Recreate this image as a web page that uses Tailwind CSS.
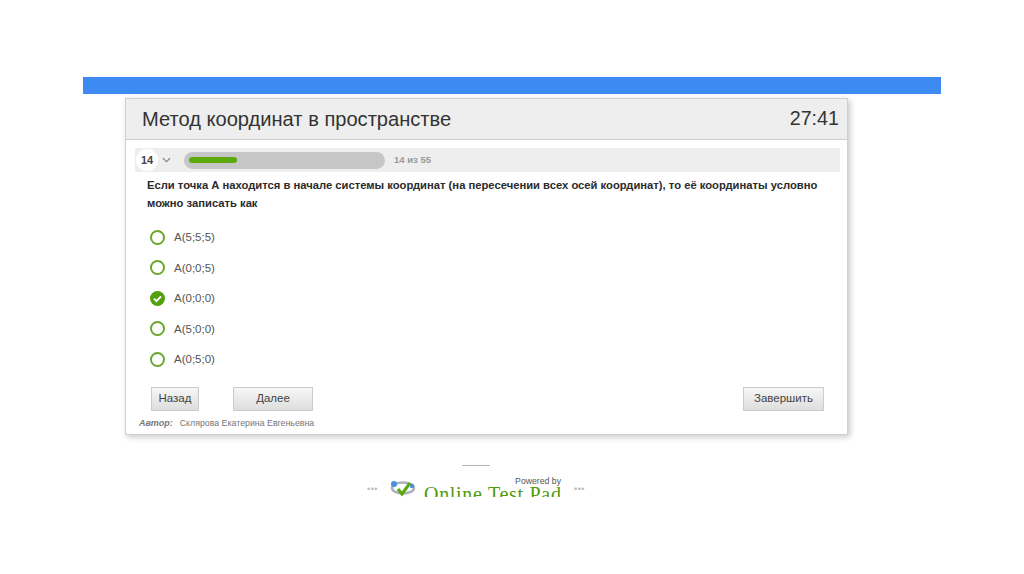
<!DOCTYPE html>
<html lang="ru">
<head>
<meta charset="utf-8">
<script src="https://cdn.jsdelivr.net/npm/@tailwindcss/browser@4"></script>
</head>
<body class="bg-white font-['Liberation_Sans',Arial,sans-serif]">
<div class="w-[1024px] h-[574px] overflow-hidden pt-[77px]">
  <div class="ml-[83px] w-[858px] h-[17px] bg-[#3d8bf2]"></div>
  <main class="ml-[125px] mt-[4px] w-[723px] h-[337px] bg-white border border-[#d0d0d0] shadow-[2px_2px_6px_rgba(0,0,0,0.22)] flex flex-col">
    <header class="h-[41px] shrink-0 bg-[#eeeeee] border-b border-[#cfcfcf] flex items-center justify-between pl-[16px] pr-[8px] text-[#333333]">
      <h1 class="text-[20.1px] leading-none">Метод координат в пространстве</h1>
      <div class="text-[19.7px] leading-none">27:41</div>
    </header>
    <div class="mt-[8px] ml-[9px] w-[705px] h-[24px] shrink-0 bg-[#eeeeee] flex items-center">
      <div class="ml-[1px] w-[22px] h-[22px] rounded-full bg-white flex items-center justify-center text-[11px] font-bold text-[#444444]">14</div>
      <svg class="ml-[4px] w-[9px] h-[6px]" viewBox="0 0 10 6" fill="none" stroke="#777777" stroke-width="1.2"><path d="M1 1l4 4 4-4"/></svg>
      <div class="ml-[13px] w-[201px] h-[17px] rounded-full bg-[#c6c6c6] flex items-center pl-[5px]">
        <div class="w-[48px] h-[6px] rounded-full bg-[#5aa80c]"></div>
      </div>
      <div class="ml-[9px] text-[9.5px] font-bold text-[#9a9a9a]">14 из 55</div>
    </div>
    <p class="mt-[5px] ml-[21px] w-[690px] text-[11.23px] leading-[17.5px] font-bold text-[#2b2b2b]">Если точка А находится в начале системы координат (на пересечении всех осей координат), то её координаты условно можно записать как</p>
    <ul class="mt-[17px] ml-[24px] flex flex-col gap-[14.5px] text-[11.5px] leading-[16px] text-[#555555]">
      <li class="flex items-center gap-[9px]"><span class="w-[15px] h-[15px] rounded-full border-2 border-[#6aa72c]"></span>A(5;5;5)</li>
      <li class="flex items-center gap-[9px]"><span class="w-[15px] h-[15px] rounded-full border-2 border-[#6aa72c]"></span>A(0;0;5)</li>
      <li class="flex items-center gap-[9px]"><svg class="w-[15px] h-[15px]" viewBox="0 0 15 15"><circle cx="7.5" cy="7.5" r="7.5" fill="#52a00e"/><path d="M4 7.6l2.5 2.5L11 5.4" fill="none" stroke="#fff" stroke-width="2"/></svg>A(0;0;0)</li>
      <li class="flex items-center gap-[9px]"><span class="w-[15px] h-[15px] rounded-full border-2 border-[#6aa72c]"></span>A(5;0;0)</li>
      <li class="flex items-center gap-[9px]"><span class="w-[15px] h-[15px] rounded-full border-2 border-[#6aa72c]"></span>A(0;5;0)</li>
    </ul>
    <div class="mt-[20px] ml-[25px] w-[673px] flex text-[11.5px] text-[#444444]">
      <button class="w-[48px] h-[24px] border border-[#cccccc] bg-gradient-to-b from-[#f6f6f6] to-[#dedede]">Назад</button>
      <button class="ml-[34px] w-[80px] h-[24px] border border-[#cccccc] bg-gradient-to-b from-[#f6f6f6] to-[#dedede]">Далее</button>
      <button class="ml-auto w-[81px] h-[24px] border border-[#cccccc] bg-gradient-to-b from-[#f6f6f6] to-[#dedede]">Завершить</button>
    </div>
    <div class="mt-[6px] ml-[13px] flex items-center text-[8.8px] leading-[12px] text-[#777777]">
      <span class="italic font-bold text-[9px] mr-[7px]">Автор:</span>Склярова Екатерина Евгеньевна
    </div>
  </main>
  <div class="mt-[30px] ml-[462px] w-[28px] h-px bg-[#b5b5b5]"></div>
  <div class="mt-[9px] ml-[367px] w-[220px] h-[22px] overflow-hidden flex items-start text-[#bbbbbb]">
    <span class="mt-[9px] w-[12px] text-[9px] leading-[10px] tracking-[0.5px]">•••</span>
    <svg class="ml-[11px] mt-[5px] w-[26px] h-[17px] shrink-0" viewBox="0 0 26 17" fill="none">
      <ellipse cx="13" cy="8" rx="11" ry="5.5" stroke="#aab2bb" stroke-width="2.5"/>
      <circle cx="4" cy="4" r="3" fill="#4a90d9"/>
      <circle cx="22" cy="6" r="2.2" fill="#4a90d9"/>
      <path d="M8 9l4 5 8-11" stroke="#5aa80c" stroke-width="3"/>
    </svg>
    <div class="ml-[7px] w-[138px] shrink-0 relative h-[22px]">
      <div class="absolute right-0 top-[1px] text-[8.7px] leading-[10px] text-[#555555] whitespace-nowrap">Powered by</div>
      <div class="absolute left-[1px] top-[9px] font-['Liberation_Serif',serif] text-[20px] leading-[20px] tracking-[0.7px] text-[#4f9a0e] whitespace-nowrap">Online Test Pad</div>
    </div>
    <span class="ml-[13px] mt-[9px] w-[12px] text-[9px] leading-[10px] tracking-[0.5px]">•••</span>
  </div>
</div>
</body>
</html>
